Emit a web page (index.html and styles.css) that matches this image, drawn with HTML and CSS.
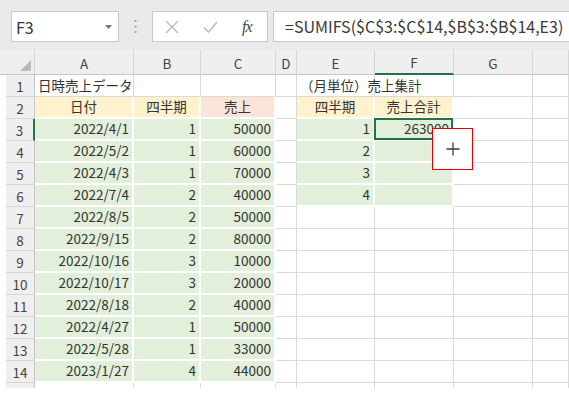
FILE: index.html
```html
<!DOCTYPE html>
<html lang="ja">
<head>
    <meta charset="UTF-8">
    <meta name="viewport" content="width=device-width, initial-scale=1.0">
    <title>売上集計</title>
    <link rel="stylesheet" href="styles.css">
</head>
<body>
    <div class="toolbar">
        <div class="namebox">
            <span>F3</span>
            <svg class="caret" width="7" height="4" viewBox="0 0 7 4"><path d="M0 0h7L3.5 4z" fill="#777"/></svg>
        </div>
        <div class="grip">
            <svg width="3" height="13" viewBox="0 0 3 13"><rect x="0.5" y="0" width="2" height="2" fill="#a6a6a6"/><rect x="0.5" y="5.5" width="2" height="2" fill="#a6a6a6"/><rect x="0.5" y="11" width="2" height="2" fill="#a6a6a6"/></svg>
        </div>
        <div class="fnbtns">
            <svg class="btn" width="14" height="14" viewBox="0 0 14 14"><path d="M1 1L13 13M13 1L1 13" stroke="#b8b8b8" stroke-width="1.3" fill="none"/></svg>
            <svg class="btn" width="15" height="12" viewBox="0 0 15 12"><path d="M1 6.5L5.5 11L14 1" stroke="#b8b8b8" stroke-width="1.3" fill="none"/></svg>
            <span class="fx"><i>f</i><i>x</i></span>
        </div>
        <div class="formula">=SUMIFS($C$3:$C$14,$B$3:$B$14,E3)</div>
    </div>

    <div class="sheet">
        <!-- column headers -->
        <div class="ch corner"><svg width="11" height="11" viewBox="0 0 11 11"><path d="M11 0V11H0z" fill="#b9b9b9"/></svg></div>
        <div class="ch">A</div><div class="ch">B</div><div class="ch">C</div><div class="ch">D</div>
        <div class="ch">E</div><div class="ch cur">F</div><div class="ch">G</div><div class="ch"></div>

        <div class="rh">1</div>
        <div class="c">日時売上データ</div><div class="c"></div><div class="c"></div><div class="c"></div>
        <div class="c">（月単位）売上集計</div><div class="c"></div><div class="c"></div><div class="c"></div>

        <div class="rh">2</div>
        <div class="c y mid">日付</div><div class="c y mid">四半期</div><div class="c p mid">売上</div><div class="c"></div>
        <div class="c y mid">四半期</div><div class="c y mid">売上合計</div><div class="c"></div><div class="c"></div>

        <div class="rh on">3</div>
        <div class="c g n">2022/4/1</div><div class="c g n">1</div><div class="c g n">50000</div><div class="c"></div>
        <div class="c g n">1</div>
        <div class="c g n sel">263000
            <div class="cursor"><svg width="14" height="14" viewBox="0 0 14 14"><path d="M7 0.5V13.5M0.5 7H13.5" stroke="#3a3a3a" stroke-width="1.3" fill="none"/></svg></div>
        </div>
        <div class="c"></div><div class="c"></div>

        <div class="rh">4</div>
        <div class="c g n">2022/5/2</div><div class="c g n">1</div><div class="c g n">60000</div><div class="c"></div>
        <div class="c g n">2</div><div class="c g n"></div><div class="c"></div><div class="c"></div>

        <div class="rh">5</div>
        <div class="c g n">2022/4/3</div><div class="c g n">1</div><div class="c g n">70000</div><div class="c"></div>
        <div class="c g n">3</div><div class="c g n"></div><div class="c"></div><div class="c"></div>

        <div class="rh">6</div>
        <div class="c g n">2022/7/4</div><div class="c g n">2</div><div class="c g n">40000</div><div class="c"></div>
        <div class="c g n">4</div><div class="c g n"></div><div class="c"></div><div class="c"></div>

        <div class="rh">7</div>
        <div class="c g n">2022/8/5</div><div class="c g n">2</div><div class="c g n">50000</div><div class="c"></div>
        <div class="c"></div><div class="c"></div><div class="c"></div><div class="c"></div>

        <div class="rh">8</div>
        <div class="c g n">2022/9/15</div><div class="c g n">2</div><div class="c g n">80000</div><div class="c"></div>
        <div class="c"></div><div class="c"></div><div class="c"></div><div class="c"></div>

        <div class="rh">9</div>
        <div class="c g n">2022/10/16</div><div class="c g n">3</div><div class="c g n">10000</div><div class="c"></div>
        <div class="c"></div><div class="c"></div><div class="c"></div><div class="c"></div>

        <div class="rh">10</div>
        <div class="c g n">2022/10/17</div><div class="c g n">3</div><div class="c g n">20000</div><div class="c"></div>
        <div class="c"></div><div class="c"></div><div class="c"></div><div class="c"></div>

        <div class="rh">11</div>
        <div class="c g n">2022/8/18</div><div class="c g n">2</div><div class="c g n">40000</div><div class="c"></div>
        <div class="c"></div><div class="c"></div><div class="c"></div><div class="c"></div>

        <div class="rh">12</div>
        <div class="c g n">2022/4/27</div><div class="c g n">1</div><div class="c g n">50000</div><div class="c"></div>
        <div class="c"></div><div class="c"></div><div class="c"></div><div class="c"></div>

        <div class="rh">13</div>
        <div class="c g n">2022/5/28</div><div class="c g n">1</div><div class="c g n">33000</div><div class="c"></div>
        <div class="c"></div><div class="c"></div><div class="c"></div><div class="c"></div>

        <div class="rh">14</div>
        <div class="c g n">2023/1/27</div><div class="c g n">4</div><div class="c g n">44000</div><div class="c"></div>
        <div class="c"></div><div class="c"></div><div class="c"></div><div class="c"></div>

        <!-- partially visible row 15 -->
        <div class="rh cut"></div>
        <div class="c cut"></div><div class="c cut"></div><div class="c cut"></div><div class="c cut"></div>
        <div class="c cut"></div><div class="c cut"></div><div class="c cut"></div><div class="c cut"></div>
    </div>
</body>
</html>
```

FILE: styles.css
```css
* {
    box-sizing: border-box;
}
body {
    margin: 0;
    background: #fff;
    font-family: "Noto Sans CJK JP", "Noto Sans", sans-serif;
    color: #333;
    overflow: hidden;
}

/* formula bar */
.toolbar {
    display: flex;
    align-items: flex-start;
    height: 50px;
    padding: 11px 0 0 11px;
    background: #eaeaea;
}
.namebox {
    display: flex;
    align-items: center;
    justify-content: space-between;
    width: 108px;
    height: 31px;
    padding: 0 6px 0 4px;
    background: #fff;
    border: 1px solid #c8c8c8;
    font-size: 16px;
    color: #333;
}
.grip {
    display: flex;
    align-items: center;
    justify-content: center;
    width: 33px;
    height: 31px;
}
.fnbtns {
    display: flex;
    align-items: center;
    width: 116px;
    height: 31px;
    padding-left: 12px;
    gap: 24px;
    background: #fff;
    border: 1px solid #c8c8c8;
}
.fx {
    font-family: "Liberation Serif", serif;
    font-size: 16px;
    color: #444;
    letter-spacing: -1px;
}
.formula {
    flex: 1;
    height: 31px;
    margin-left: 5px;
    margin-right: -10px;
    padding-left: 11px;
    background: #fff;
    border: 1px solid #c8c8c8;
    font-size: 16px;
    line-height: 28px;
    color: #3a3a3a;
    white-space: nowrap;
    overflow: hidden;
}

/* worksheet */
.sheet {
    display: grid;
    grid-template-columns: 35px 99px 67px 75px 21px 78px 79px 79px 1fr;
    grid-template-rows: 25px repeat(14, 22px) 5px;
    font-size: 13.5px;
}
.ch {
    display: flex;
    align-items: center;
    justify-content: center;
    background: #efefef;
    border-right: 1px solid #d6d6d6;
    border-bottom: 1px solid #c6c6c6;
    color: #444;
    padding-top: 1px;
}
.ch.corner {
    justify-content: flex-end;
    align-items: flex-end;
    padding: 0 3px 3px 0;
}
.ch.cur {
    border-bottom: 2px solid #217346;
}
.rh {
    display: flex;
    align-items: center;
    justify-content: center;
    margin-left: 6px;
    background: #efefef;
    border-right: 1px solid #c6c6c6;
    border-bottom: 1px solid #d6d6d6;
    color: #444;
}
.rh.on {
    border-right: 2px solid #217346;
}
.c {
    display: flex;
    align-items: flex-end;
    padding: 0 3px 1px;
    line-height: 19px;
    border-right: 1px solid #dadada;
    border-bottom: 1px solid #dadada;
    white-space: nowrap;
    overflow: visible;
}
.cut {
    border-bottom: none;
}
.mid {
    justify-content: center;
}
.n {
    justify-content: flex-end;
}
.y, .p, .g {
    border-right: 2px solid #fff;
    border-bottom: 2px solid #fff;
}
.y { background: #fff2cc; }
.p { background: #fce4d6; }
.g { background: #e2efda; }

.sel {
    position: relative;
    z-index: 2;
}
.sel::after {
    content: "";
    position: absolute;
    left: -1px;
    top: -1px;
    right: -1px;
    bottom: -1px;
    border: 2px solid #217346;
}
.cursor {
    position: absolute;
    left: 57px;
    top: 9px;
    z-index: 3;
    display: flex;
    align-items: center;
    justify-content: center;
    width: 41px;
    height: 42px;
    background: #fff;
    border: 1px solid #e60000;
}
```
